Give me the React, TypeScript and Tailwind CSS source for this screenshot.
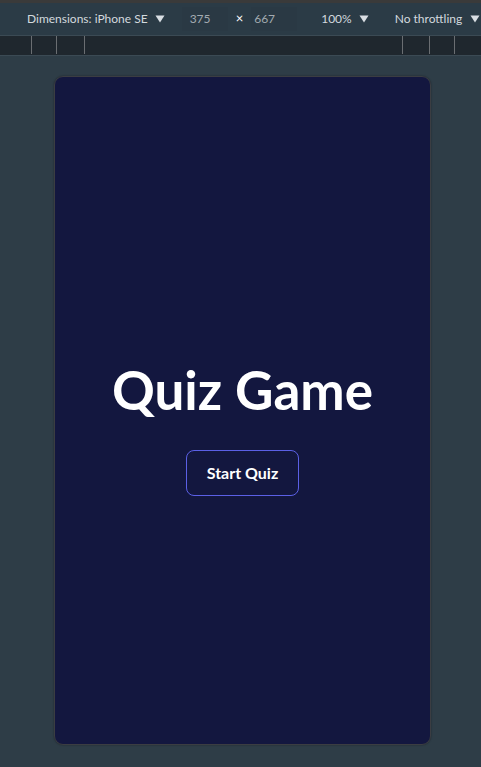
import React from "react";

function Caret({ className = "" }: { className?: string }) {
  return (
    <svg width="10" height="8" viewBox="0 0 10 8" className={className}>
      <path d="M0.5 0.5 L9.5 0.5 L5 7.5 Z" fill="#d9dee3" />
    </svg>
  );
}

export default function App() {
  return (
    <div
      className="w-[481px] h-[767px] bg-[#2e3d47] flex flex-col overflow-hidden"
      style={{ fontFamily: 'Lato, "Noto Sans", sans-serif' }}
    >
      <div className="h-[3px] bg-[#3a3a3a]" />
      <div className="h-[33px] bg-[#2b3b46] flex items-center text-[12px] text-[#d3d9de] border-b border-[#3b4a54] whitespace-nowrap">
        <div className="ml-[27px] flex items-center gap-[7px]">
          <span>Dimensions: iPhone SE</span>
          <Caret />
        </div>
        <div className="ml-[17px] w-[46px] h-[24px] flex items-center pl-[8px] bg-[#2a3944] text-[#a3aab0]">375</div>
        <span className="ml-[8px] text-[#ffffff] text-[13px]">×</span>
        <div className="ml-[8px] w-[46px] h-[24px] flex items-center pl-[3px] bg-[#2a3944] text-[#a3aab0]">667</div>
        <div className="ml-[24px] flex items-center gap-[7px]">
          <span>100%</span>
          <Caret />
        </div>
        <div className="ml-[26px] flex items-center gap-[8px]">
          <span>No throttling</span>
          <Caret />
        </div>
      </div>
      <div className="h-[20px] bg-[#1f272e] border-b border-[#3b4a54] relative">
        {[31, 56, 84, 402, 429, 454].map((x) => (
          <div key={x} className="absolute top-0 bottom-[1px] w-[1px] bg-[#6a6e72]" style={{ left: x }} />
        ))}
      </div>
      <div className="flex-1 pt-[20px] pl-[54px]">
        <div className="w-[377px] h-[669px] rounded-[9px] border border-[#3b3d42] bg-[#13173f] flex flex-col items-center justify-center pt-[37px] shadow-[0_0_2px_rgba(0,0,0,0.4)]">
          <h1 className="text-[53px] leading-[56px] font-bold text-white">Quiz Game</h1>
          <button className="mt-[32px] w-[113px] h-[46px] rounded-[8px] border border-[#5b60e6] text-white text-[16px] font-bold">
            Start Quiz
          </button>
        </div>
      </div>
    </div>
  );
}
